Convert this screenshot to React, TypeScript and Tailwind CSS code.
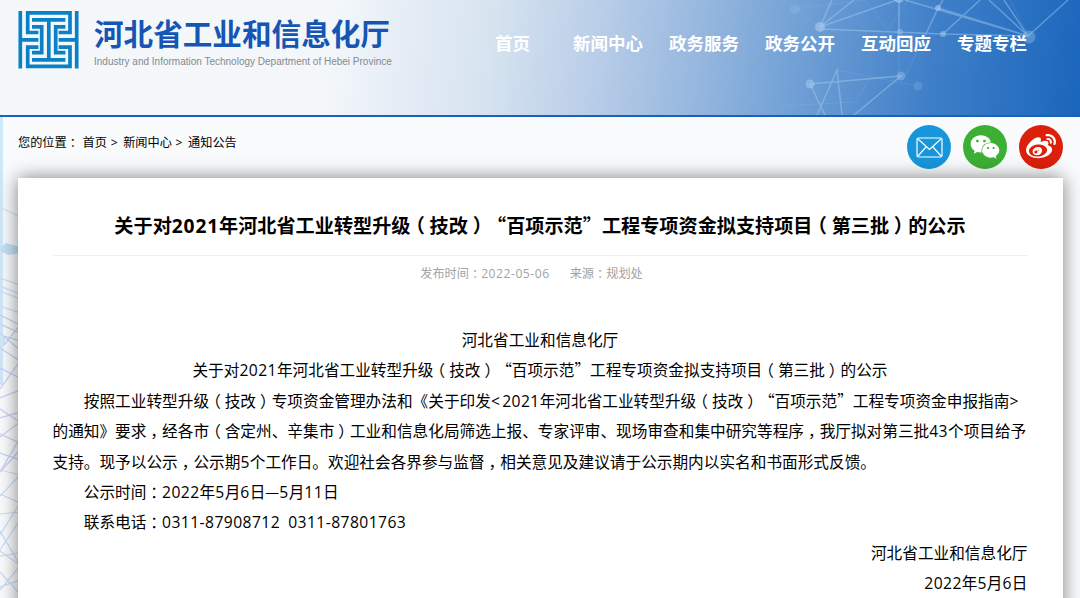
import React from 'react';
import { FaWeixin, FaWeibo } from 'react-icons/fa';

const NAV = ['首页', '新闻中心', '政务服务', '政务公开', '互动回应', '专题专栏'];
const NAV_WIDTHS = ['w-[78px]', 'w-24', 'w-24', 'w-24', 'w-24', 'w-[71px]'];

// Full-width punctuation sits in the middle of its cell
const Text: React.FC<{ children: string }> = ({ children }) => (
  <>
    {children.split(/([（），：“”—]|[<>]|[\d-]+)/).map((part, i) => {
      if (/^[（），：]$/.test(part)) {
        return <span key={i} className="inline-block w-[1em] text-center font-['Noto_Sans_CJK_SC'] [font-feature-settings:'halt']">{part}</span>;
      }
      if (/^[“”—]$/.test(part)) {
        return <span key={i} className="font-['Noto_Sans_CJK_SC']">{part}</span>;
      }
      if (/^[<>]$/.test(part)) {
        return <span key={i} className="tracking-[0.15em]">{part}</span>;
      }
      if (/^[\d-]+$/.test(part)) {
        return <span key={i} className="tracking-[var(--digits,0.027em)]">{part}</span>;
      }
      return part;
    })}
  </>
);

const Logo: React.FC = () => (
  <svg className="w-[62px] h-[59px]" viewBox="0 0 62 59" fill="none" stroke="#0a80c6" strokeWidth="3.7">
    <path d="M2.3 1v57.4M58.7 1v57.4" />
    <path d="M2 29.8H20.4M40.6 29.8H58.7" />
    <path d="M20.4 22.5H9.7V2.8H52V22.5H40.6" />
    <path d="M20.4 37.2H9.7V56.4H52V37.2H40.6" />
    <path d="M14 9.8H47.4M14 49.8H47.4M30.8 9.8V49.8" />
    <path d="M14 16.8H23.7V42.6H14M47.4 16.8H37.7V42.6H47.4" />
  </svg>
);

const Network: React.FC = () => (
  <svg className="absolute right-0 top-0 w-[300px] h-[115px]" viewBox="0 0 300 115" stroke="#a9cdf0" fill="none">
    <g strokeWidth="1.5" opacity="0.45">
      <path d="M52 0L40 27L74 0M40 27L117 0M40 29L163 34L200 0M119 0V32M125 0L248 36M163 0L158 8L145 36M158 8L248 36M209 0L248 36L224 0M163 34L248 36L288 0" />
      <path d="M30 84L45 115M37 115L57 70L62 115M30 84L121 76L74 115" />
    </g>
    <path d="M15 9L40 27M15 9L86 0L108 30L128 0M57 70L138 86M76 102L90 77M76 102L0 106M119 32V76M145 36L125 76M248 36L230 0" strokeWidth="1" opacity="0.15" />
    <g stroke="none" fill="#a9cdf0">
      <circle cx="40" cy="27" r="5" opacity="0.6" />
      <circle cx="119" cy="-2" r="5" opacity="0.6" />
      <circle cx="158" cy="8" r="3" opacity="0.6" />
      <circle cx="163" cy="34" r="3" opacity="0.5" />
      <circle cx="120" cy="32" r="3" opacity="0.4" />
      <circle cx="30" cy="84" r="4.5" opacity="0.5" />
      <circle cx="121" cy="76" r="4.5" opacity="0.35" />
      <circle cx="138" cy="86" r="4.5" opacity="0.2" />
      <circle cx="249" cy="37" r="6.5" opacity="0.35" />
      <circle cx="15" cy="9" r="5" opacity="0.2" />
    </g>
  </svg>
);

const Mesh: React.FC = () => (
  <svg className="absolute left-0 top-0 w-5 h-[481px]" viewBox="0 117 20 481" fill="none" strokeWidth="1.2">
    <path d="M1.5 117V385" stroke="#cfe9fb" strokeWidth="3" />
    <path d="M0 207L20 217" stroke="#d5e6f6" />
    <path d="M0 248L6 243L20 247V253L8 255L0 251Z" fill="#c5e1f5" />
    <path d="M0 278L20 285M0 286L20 294M0 291L20 299M0 306L20 313" stroke="#cfe0f8" />
    <path d="M0 315L20 325M0 324L20 333M0 333L20 350M20 325L4 345V336L20 341M0 348L20 361M20 361L0 389M0 368L20 378M0 398L20 390M0 409L20 422L0 437M0 418L20 412M0 434L20 443M20 438L0 472L20 450M0 453L20 460" stroke="#c8d1f8" />
    <path d="M0 470L20 475M0 494L20 503L0 535M20 475L0 496M0 514L20 512M0 531L20 565L0 551M0 550L20 520M0 556L20 553M0 572L20 594M20 566L0 590M0 587L20 580" stroke="#c9dcf7" />
  </svg>
);

export default function App() {
  return (
    <div className="w-[1080px] h-[598px] overflow-hidden bg-[#f9fbfd] text-black font-['Open_Sans','Noto_Sans_CJK_SC',sans-serif]">
      <header className="relative flex h-[117px] border-b-2 border-[#1c60bd] bg-[linear-gradient(97deg,#f4f8fb_0%,#f3f7fa_31%,#e6edf6_37%,#d7e4f0_45%,#bdd0e9_54%,#94b6de_65%,#6f9fd5_74%,#3f7fc8_86%,#1a66bc_100%)]">
        <Network />
        <div className="flex w-[495px] shrink-0 pl-[18px] pt-[10px]">
          <Logo />
          <div className="pl-[14px] whitespace-nowrap">
            <h1 className="h-[43px] text-[29.6px] leading-[46px] font-bold text-[#1555b4] font-['Noto_Sans_CJK_SC']">河北省工业和信息化厅</h1>
            <p className="text-[10px] leading-[17px] text-[#85898e] font-['Liberation_Sans']">Industry and Information Technology Department of Hebei Province</p>
          </div>
        </div>
        <nav className="relative flex pt-[31px] text-[17.5px] leading-6 font-bold text-white whitespace-nowrap font-['Noto_Sans_CJK_SC']">
          {NAV.map((item, i) => (
            <a key={item} className={NAV_WIDTHS[i]}>{item}</a>
          ))}
        </nav>
      </header>

      <div className="relative h-[481px]">
        <Mesh />
        <div className="flex h-[61px] justify-between pl-[18px] pr-[17px]">
          <p className="pt-[15px] text-[12.2px] leading-5 whitespace-pre [word-spacing:0.5px]">
            <Text>您的位置： 首页 &gt; 新闻中心 &gt; 通知公告</Text>
          </p>
          <div className="flex gap-3 pt-2">
            <span className="flex size-11 items-center justify-center rounded-full bg-[#1796db]">
              <svg className="w-[27px] h-[21px]" viewBox="0 0 27 21" fill="none" stroke="white" strokeWidth="1.2">
                <rect x="1" y="1" width="25" height="19" rx="1.5" />
                <path d="M2 2L13.5 12.5L25 2M2 19L10 10M25 19L17 10" />
              </svg>
            </span>
            <span className="flex size-11 items-center justify-center rounded-full bg-[#3cb034] text-white">
              <FaWeixin size={30} />
            </span>
            <span className="flex size-11 items-center justify-center rounded-full bg-[#dc200b] text-white">
              <FaWeibo size={30} />
            </span>
          </div>
        </div>

        <main className="relative ml-[18px] mr-[17px] h-[500px] bg-white pl-[34.5px] pr-[35.5px] pt-[29px] shadow-[0_0_18px_rgba(0,0,0,0.5)]">
          <h2 className="h-[49px] border-b border-[#eee] text-center text-[19.15px] leading-9 font-bold whitespace-nowrap [--digits:0.045em]">
            <Text>关于对2021年河北省工业转型升级（技改）“百项示范”工程专项资金拟支持项目（第三批）的公示</Text>
          </h2>
          <p className="flex justify-center gap-5 pt-[7px] pr-[17px] text-[12.2px] leading-5 text-[#a3a3a3] [--digits:0.04em]">
            <span><Text>发布时间：2022-05-06</Text></span>
            <span><Text>来源：规划处</Text></span>
          </p>
          <article className="pt-[41px] text-[15.66px] leading-[30.4px] whitespace-pre">
            <p className="text-center"><Text>河北省工业和信息化厅</Text></p>
            <p className="text-center"><Text>关于对2021年河北省工业转型升级（技改）“百项示范”工程专项资金拟支持项目（第三批）的公示</Text></p>
            <p className="pl-[2em]"><Text>按照工业转型升级（技改）专项资金管理办法和《关于印发&lt;2021年河北省工业转型升级（技改）“百项示范”工程专项资金申报指南&gt;</Text></p>
            <p><Text>的通知》要求，经各市（含定州、辛集市）工业和信息化局筛选上报、专家评审、现场审查和集中研究等程序，我厅拟对第三批43个项目给予</Text></p>
            <p><Text>支持。现予以公示，公示期5个工作日。欢迎社会各界参与监督，相关意见及建议请于公示期内以实名和书面形式反馈。</Text></p>
            <p className="pl-[2em]"><Text>公示时间：2022年5月6日—5月11日</Text></p>
            <p className="pl-[2em]"><Text>联系电话：0311-87908712  0311-87801763</Text></p>
            <p className="text-right"><Text>河北省工业和信息化厅</Text></p>
            <p className="text-right"><Text>2022年5月6日</Text></p>
          </article>
        </main>
      </div>
    </div>
  );
}
